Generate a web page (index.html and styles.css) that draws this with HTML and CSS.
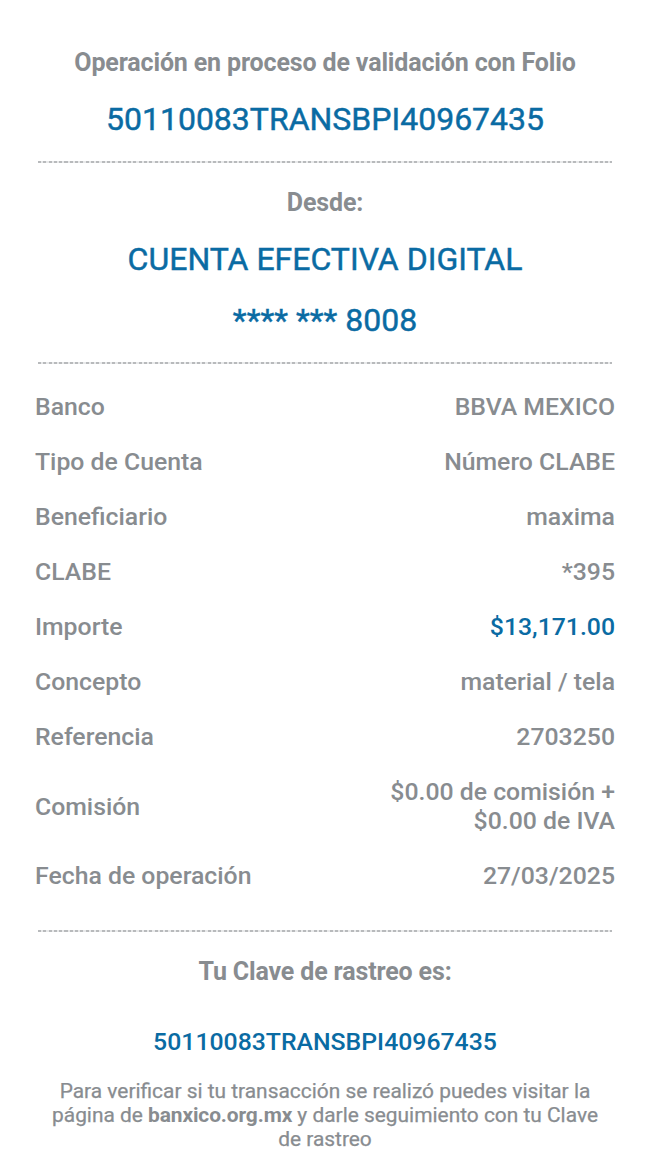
FILE: index.html
```html
<!DOCTYPE html>
<html lang="es">
<head>
    <meta charset="UTF-8">
    <meta name="viewport" content="width=device-width, initial-scale=1.0">
    <title>Comprobante de transferencia</title>
    <link rel="stylesheet" href="styles.css">
</head>
<body>
    <main class="comprobante">
        <!-- Folio -->
        <section class="folio">
            <h2 class="titulo">Operación en proceso de validación con Folio</h2>
            <p class="dato">50110083TRANSBPI40967435</p>
        </section>
        <hr class="linea">

        <!-- Cuenta de origen -->
        <section class="origen">
            <h2 class="titulo">Desde:</h2>
            <p class="dato">CUENTA EFECTIVA DIGITAL</p>
            <p class="dato">**** *** 8008</p>
        </section>
        <hr class="linea">

        <!-- Detalle de la operación -->
        <dl class="detalle">
            <div class="fila"><dt>Banco</dt><dd>BBVA MEXICO</dd></div>
            <div class="fila"><dt>Tipo de Cuenta</dt><dd>Número CLABE</dd></div>
            <div class="fila"><dt>Beneficiario</dt><dd>maxima</dd></div>
            <div class="fila"><dt>CLABE</dt><dd>*395</dd></div>
            <div class="fila"><dt>Importe</dt><dd class="importe">$13,171.00</dd></div>
            <div class="fila"><dt>Concepto</dt><dd>material / tela</dd></div>
            <div class="fila"><dt>Referencia</dt><dd>2703250</dd></div>
            <div class="fila"><dt>Comisión</dt><dd>$0.00 de comisión +<br>$0.00 de IVA</dd></div>
            <div class="fila"><dt>Fecha de operación</dt><dd>27/03/2025</dd></div>
        </dl>
        <hr class="linea">

        <!-- Clave de rastreo -->
        <section class="rastreo">
            <h2 class="titulo">Tu Clave de rastreo es:</h2>
            <p class="clave">50110083TRANSBPI40967435</p>
            <p class="nota">Para verificar si tu transacción se realizó puedes visitar la<br>página de <b>banxico.org.mx</b> y darle seguimiento con tu Clave<br>de rastreo</p>
        </section>
    </main>
</body>
</html>
```
FILE: styles.css
```css
body {
    margin: 0;
    background: #fff;
    color: #888c90;
    font-family: Roboto, "Liberation Sans", sans-serif;
}
h2, p, dl, dd {
    margin: 0;
}
.comprobante {
    padding: 48px 38px 0;
    text-align: center;
}
/* Línea punteada entre secciones */
.linea {
    height: 2px;
    margin: 0;
    border: none;
    background: repeating-linear-gradient(to right, #b8babc 0, #b8babc 3px, #e8e9ea 3px, #e8e9ea 5.3px);
}
.titulo {
    font-size: 25px;
    line-height: 30px;
    font-weight: 700;
    letter-spacing: -0.15px;
}
.dato {
    margin-top: 22px;
    color: #0a6ba3;
    font-size: 32px;
    line-height: 38px;
    -webkit-text-stroke: 0.45px;
}
.folio {
    height: 113px;
}
.origen {
    height: 174px;
    padding-top: 25px;
}
.origen .dato + .dato {
    margin-top: 23px;
}
.detalle {
    height: 538px;
    padding-top: 28px;
    font-size: 24.8px;
    font-weight: 500;
    line-height: 29px;
}
.fila {
    display: flex;
    justify-content: space-between;
    align-items: center;
    margin: 0 -3px 26px;
}
.fila dd {
    text-align: right;
}
.fila .importe {
    color: #0a6ba3;
}
.rastreo {
    padding-top: 25px;
}
.clave {
    margin-top: 40px;
    color: #0a6ba3;
    font-size: 24.8px;
    font-weight: 500;
    line-height: 30px;
}
.nota {
    margin: 22px -10px 0;
    font-size: 20.9px;
    line-height: 24px;
    -webkit-text-stroke: 0.25px;
}
.nota b {
    font-weight: 700;
    letter-spacing: -0.1px;
    -webkit-text-stroke: 0;
}
```
